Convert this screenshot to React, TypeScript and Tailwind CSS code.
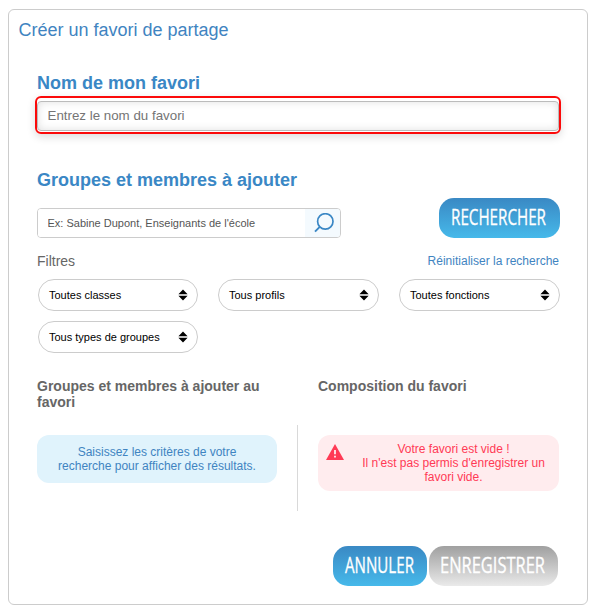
import React from "react";

const gradientBlue = "bg-linear-to-b from-[#3a89c4] to-[#46b9ea]";
const gradientGrey = "bg-linear-to-b from-[#a0a0a0] to-[#eaeaea]";

function PillButton({ label, className, textLength }: { label: string; className: string; textLength: number }) {
  return (
    <button type="button" className={`flex h-10 items-center justify-center rounded-[15px] pr-[2px] ${className}`}>
      <svg width={textLength} height="24" className="block overflow-visible" aria-label={label}>
        <text
          x="0"
          y="19"
          textLength={textLength}
          lengthAdjust="spacingAndGlyphs"
          strokeWidth="0.35"
          strokeLinejoin="round"
          className="fill-white stroke-white font-['Open_Sans',sans-serif] text-[22px]"
        >
          {label}
        </text>
      </svg>
    </button>
  );
}

function FilterSelect({ label, className }: { label: string; className: string }) {
  return (
    <div
      className={`flex h-8 items-center justify-between rounded-2xl border border-[#ccc] bg-white pr-[9px] pl-[10px] text-[11px] text-black ${className}`}
    >
      <span className="whitespace-nowrap">{label}</span>
      <svg width="10" height="12" viewBox="0 0 10 12" className="block">
        <path d="M5 0.5 9.6 5.2H0.4ZM0.4 6.8H9.6L5 11.5Z" fill="#000" />
      </svg>
    </div>
  );
}

export default function App() {
  return (
    <main className="h-[613px] w-[596px] bg-white pt-[9px] pl-2 font-['Liberation_Sans',Arial,sans-serif] text-[#666]">
      <section className="flex h-[596px] w-[580px] flex-col rounded-md border border-[#ccc]">
        <h1 className="h-10 pl-[9.5px] text-[18px] leading-[40px] text-[#3f84c1]">Créer un favori de partage</h1>

        <div className="flex flex-col pr-[27px] pl-7">
          <h2 className="mt-[22px] h-[22px] text-[18px] leading-[22px] font-bold text-[#3a87c5]">Nom de mon favori</h2>
          <div className="mt-[2px] -mr-[1px] -ml-[2px] h-[38px] rounded-[6px] border-2 border-[#fb0a0a] pt-[3px] shadow-[0_3px_9px_rgba(0,0,0,0.14)]">
            <input
              className="block h-[30px] w-full rounded-[4px] border border-[#bbb] bg-white px-[9.5px] pb-[2px] text-[13.33px] text-[#666] shadow-[inset_0_0_8px_rgba(0,0,0,0.13)] outline-none placeholder:text-[#757575]"
              placeholder="Entrez le nom du favori"
            />
          </div>

          <h2 className="mt-[35px] h-[22px] text-[18px] leading-[22px] font-bold text-[#3a87c5]">
            Groupes et membres à ajouter
          </h2>
          <div className="mt-[7px] flex h-10 items-end justify-between">
            <div className="flex h-[30px] w-[304px] overflow-hidden rounded-[4px] border border-[#ccc]">
              <input
                className="min-w-0 flex-1 bg-white pl-[9.5px] text-[11px] outline-none placeholder:text-[#555]"
                placeholder="Ex: Sabine Dupont, Enseignants de l'école"
              />
              <div className="flex w-[35px] items-center justify-center bg-[#f4fafe]">
                <svg width="20" height="20" viewBox="0 0 20 20" fill="none" stroke="#3a87c5" className="relative left-[1px]">
                  <circle cx="11.3" cy="8.4" r="7.7" strokeWidth="1.7" />
                  <path d="M6 13.6 1 18.6" strokeWidth="2" />
                </svg>
              </div>
            </div>
            <PillButton label="RECHERCHER" textLength={95} className={`w-[121px] ${gradientBlue}`} />
          </div>

          <div className="mt-3 flex h-[22px] items-center justify-between">
            <span className="text-[14px]">Filtres</span>
            <a className="pr-[1px] text-[12px] text-[#3f84c1]">Réinitialiser la recherche</a>
          </div>

          <div className="mt-[7px] grid grid-cols-[160px_161px_161px] gap-x-5 gap-y-[10px] pl-[1px]">
            <FilterSelect label="Toutes classes" className="w-[160px]" />
            <FilterSelect label="Tous profils" className="w-[161px]" />
            <FilterSelect label="Toutes fonctions" className="w-[161px]" />
            <FilterSelect label="Tous types de groupes" className="w-[160px]" />
          </div>

          <div className="mt-[25px] flex h-[133px]">
            <div className="w-[240px]">
              <h3 className="h-[57px] text-[14px] leading-4 font-bold">Groupes et membres à ajouter au favori</h3>
              <p className="flex h-12 items-center justify-center rounded-xl bg-[#e0f3fc] px-5 text-center text-[12px] leading-[14px] text-[#3f84c1]">
                Saisissez les critères de votre recherche pour afficher des résultats.
              </p>
            </div>
            <div className="mt-[47px] ml-5 h-[86px] w-px bg-[#d9d9d9]" />
            <div className="ml-5 w-[241px]">
              <h3 className="h-[57px] text-[14px] leading-4 font-bold">Composition du favori</h3>
              <div className="flex h-14 rounded-xl bg-[#ffecee] pt-[7px] pl-2 text-[#ff3a55]">
                <svg width="18" height="16" viewBox="0 0 18 16" className="mt-[2px] shrink-0">
                  <path d="M9 0 18 16H0Z" fill="#ff3a55" />
                  <path d="M8.1 6h1.8v4.2H8.1ZM8.1 11.8h1.8v1.8H8.1Z" fill="#ffecee" />
                </svg>
                <p className="ml-[14px] w-[191px] text-center text-[12px] leading-[14px]">
                  Votre favori est vide !
                  <br />
                  Il n'est pas permis d'enregistrer un favori vide.
                </p>
              </div>
            </div>
          </div>

          <div className="mt-[35px] flex justify-end gap-[2px] pr-[2px]">
            <PillButton label="ANNULER" textLength={69} className={`w-[94px] ${gradientBlue}`} />
            <PillButton label="ENREGISTRER" textLength={105} className={`w-[129px] ${gradientGrey}`} />
          </div>
        </div>
      </section>
    </main>
  );
}
